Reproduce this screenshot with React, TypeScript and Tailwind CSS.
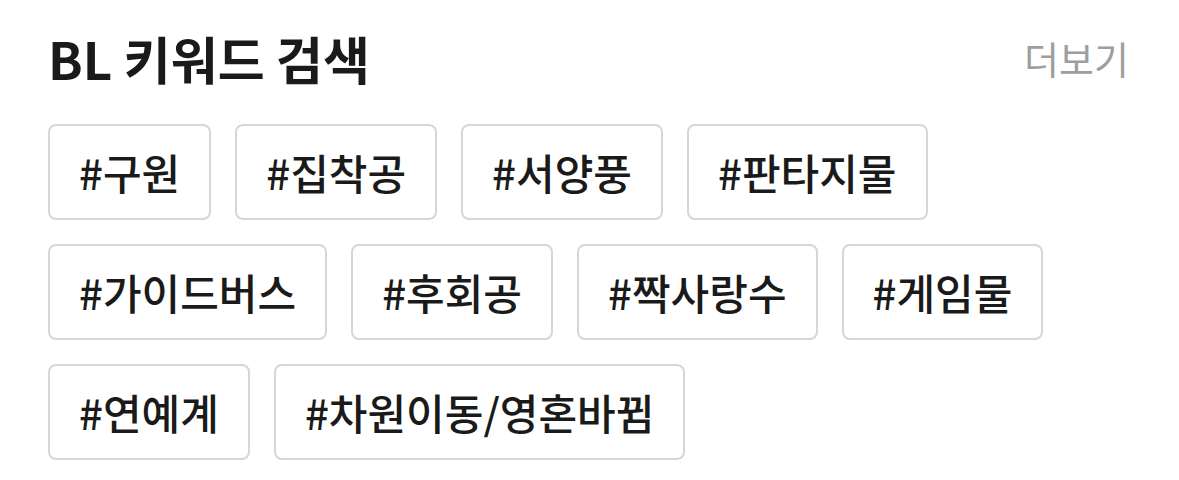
import React from "react";

const rows = [
  ["#구원", "#집착공", "#서양풍", "#판타지물"],
  ["#가이드버스", "#후회공", "#짝사랑수", "#게임물"],
  ["#연예계", "#차원이동/영혼바뀜"],
];

export default function App() {
  return (
    <div
      className="w-[1179px] h-[480px] bg-white px-[48px] pt-[19px]"
      style={{ fontFamily: '"Noto Sans CJK KR", "Noto Sans", sans-serif' }}
    >
      <div className="flex items-center justify-between h-[78px]">
        <h2 className="text-[51px] font-bold text-[#1a1a1a] tracking-[0px] leading-none">
          BL 키워드 검색
        </h2>
        <span className="text-[38px] text-[#9e9e9e] leading-none pr-[2px]">더보기</span>
      </div>
      <div className="mt-[27px] flex flex-wrap gap-[24px] w-[1020px]">
        {rows.flat().map((t) => (
          <div
            key={t}
            className="h-[96px] px-[29px] flex items-center border-2 border-[#d6d6d6] rounded-[8px] text-[42px] font-medium text-[#1a1a1a] leading-none"
          >
            {t}
          </div>
        ))}
      </div>
    </div>
  );
}
